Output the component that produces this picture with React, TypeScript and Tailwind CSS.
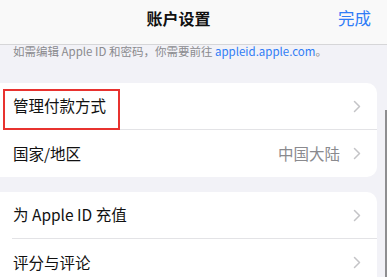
import React from "react";

const Chevron = () => (
  <svg width="8" height="13" viewBox="0 0 8 13" className="shrink-0">
    <path d="M1.5 1.5 L6.5 6.5 L1.5 11.5" fill="none" stroke="#c4c4c7" strokeWidth="1.5" strokeLinecap="round" strokeLinejoin="round" />
  </svg>
);

const Row = ({ label, value, divider }: { label: string; value?: string; divider?: boolean }) => (
  <div className={`flex items-center h-[47px] ml-[12px] pl-px pr-[16px] ${divider ? "border-b border-[#e3e3e6]" : ""}`}>
    <span className="text-[15.5px] text-[#111] flex-1">{label}</span>
    {value && <span className="text-[15.5px] text-[#8a8a8e] mr-[13px]">{value}</span>}
    <Chevron />
  </div>
);

export default function App() {
  return (
    <div
      className="relative w-[387px] h-[277px] overflow-hidden bg-[#f2f2f7] flex flex-col"
      style={{ fontFamily: '"Noto Sans CJK SC", "Noto Sans", sans-serif' }}
    >
      <div className="h-[45px] shrink-0 bg-[#f9f9f9] border-b border-[#d6d6d8] grid grid-cols-[1fr_auto_1fr] items-start pt-[7px] pr-[16px]">
        <span />
        <span className="text-[16px] leading-[22px] font-semibold text-[#111] -translate-x-[7px]">账户设置</span>
        <span className="justify-self-end text-[16.5px] leading-[22px] text-[#2f7cf6]">完成</span>
      </div>
      <div className="pl-[13px] text-[11.5px] leading-[12px] text-[#8a8a8e] whitespace-nowrap">
        如需编辑 Apple ID 和密码，你需要前往 <span className="text-[#2f7cf6]">appleid.apple.com</span>。
      </div>
      <div className="mt-[26px] mr-[10px] bg-white rounded-r-[10px]">
        <Row label="管理付款方式" divider />
        <Row label="国家/地区" value="中国大陆" />
      </div>
      <div className="mt-[15px] mr-[10px] bg-white rounded-tr-[10px]">
        <Row label="为 Apple ID 充值" divider />
        <Row label="评分与评论" />
      </div>
      <div className="absolute left-[3px] top-[89px] w-[117px] h-[41px] border-2 border-[#e8322f]" />
      <div className="absolute left-[385px] top-[110px] w-[1.5px] h-[167px] bg-[#8e8e90]" />
    </div>
  );
}
